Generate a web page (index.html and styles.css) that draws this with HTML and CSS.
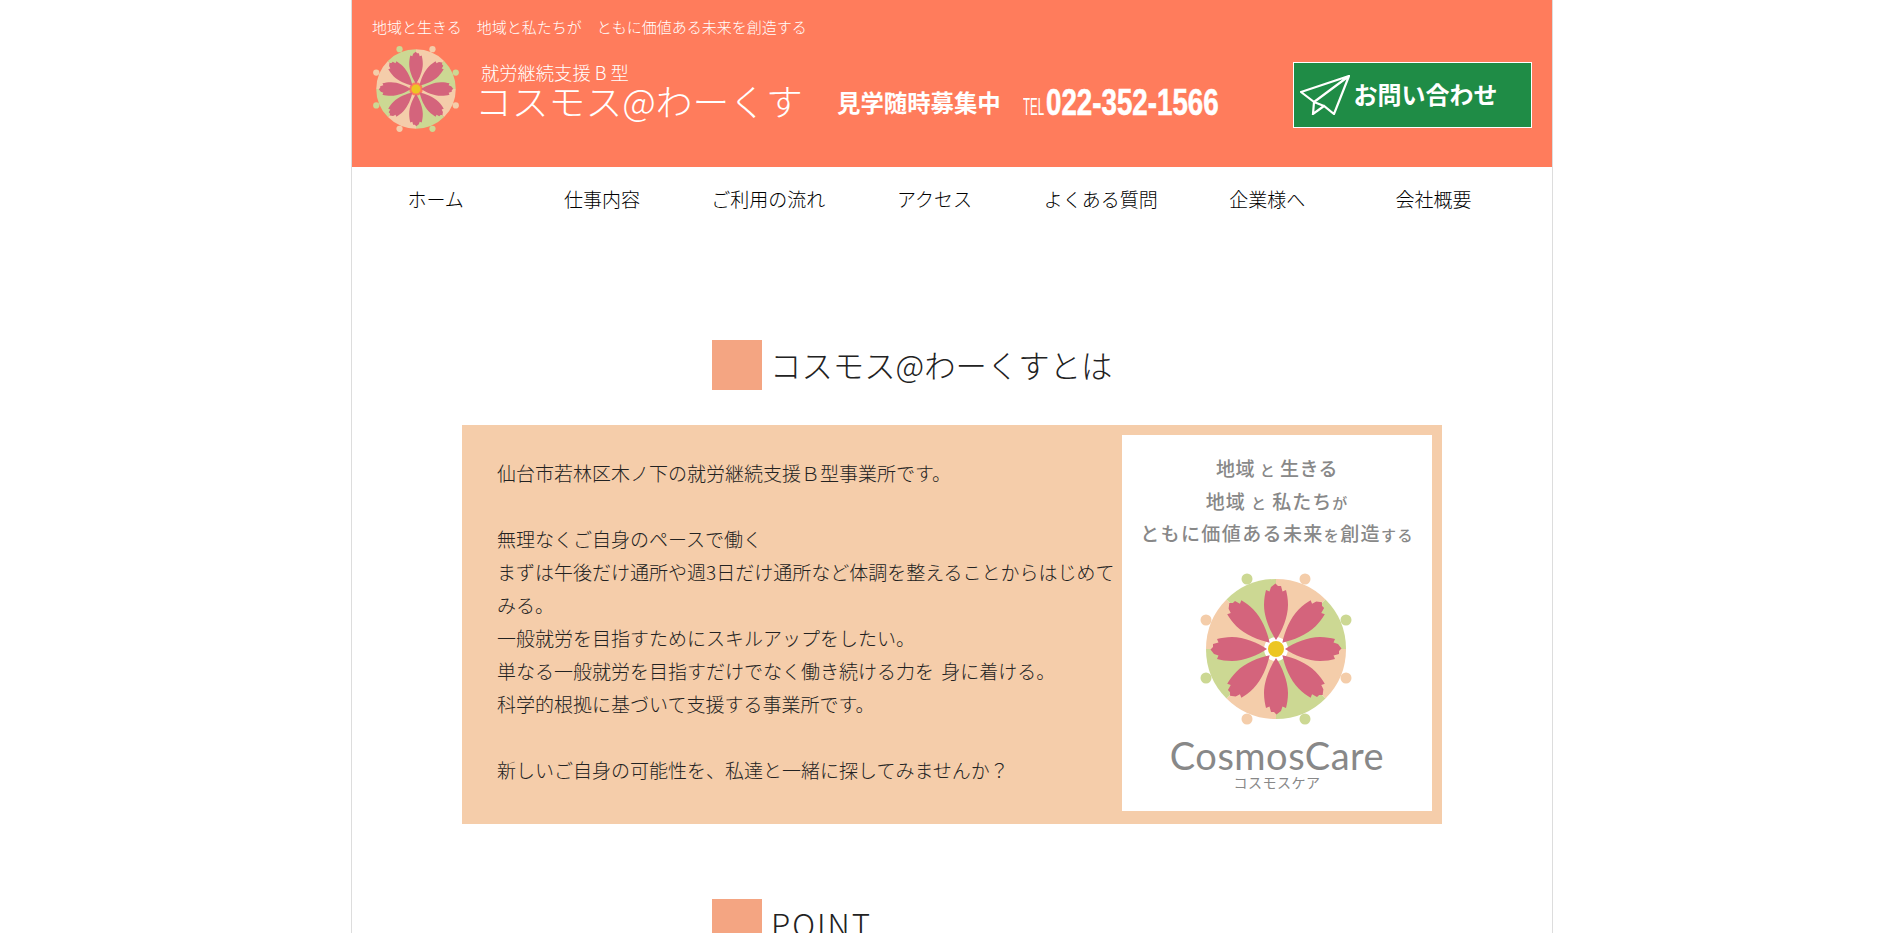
FILE: index.html
```html
<!DOCTYPE html>
<html lang="ja">
<head>
    <meta charset="UTF-8">
    <meta name="viewport" content="width=device-width, initial-scale=1.0">
    <title>コスモス@わーくす</title>
    <link rel="stylesheet" href="styles.css">
</head>
<body>
    <svg class="defs" width="0" height="0">
        <defs>
            <path id="petal" d="M0 -9 C-6 -18 -12 -32 -12 -44 C-12 -50 -11 -55 -10 -59 L-6.5 -57.5 L-5 -62 L-0.5 -65.5 L2 -63 L5 -63 L6.5 -57.5 L10 -59 C11 -55 12 -50 12 -44 C12 -32 6 -18 0 -9 Z"/>
            <symbol id="cosmos" viewBox="-81 -81 162 162">
                <path class="peach" d="M0 0 L0 -70 A70 70 0 0 1 49.5 -49.5 Z"/>
                <path class="green" d="M0 0 L49.5 -49.5 A70 70 0 0 1 70 0 Z"/>
                <path class="peach" d="M0 0 L70 0 A70 70 0 0 1 49.5 49.5 Z"/>
                <path class="green" d="M0 0 L49.5 49.5 A70 70 0 0 1 0 70 Z"/>
                <path class="peach" d="M0 0 L0 70 A70 70 0 0 1 -49.5 49.5 Z"/>
                <path class="green" d="M0 0 L-49.5 49.5 A70 70 0 0 1 -70 0 Z"/>
                <path class="peach" d="M0 0 L-70 0 A70 70 0 0 1 -49.5 -49.5 Z"/>
                <path class="green" d="M0 0 L-49.5 -49.5 A70 70 0 0 1 0 -70 Z"/>
                <circle class="peach" cx="29" cy="-70" r="5.5"/>
                <circle class="green" cx="70" cy="-29" r="5.5"/>
                <circle class="peach" cx="70" cy="29" r="5.5"/>
                <circle class="green" cx="29" cy="70" r="5.5"/>
                <circle class="peach" cx="-29" cy="70" r="5.5"/>
                <circle class="green" cx="-70" cy="29" r="5.5"/>
                <circle class="peach" cx="-70" cy="-29" r="5.5"/>
                <circle class="green" cx="-29" cy="-70" r="5.5"/>
                <circle class="halo" r="12"/>
                <use class="petal" href="#petal"/>
                <use class="petal" href="#petal" transform="rotate(45)"/>
                <use class="petal" href="#petal" transform="rotate(90)"/>
                <use class="petal" href="#petal" transform="rotate(135)"/>
                <use class="petal" href="#petal" transform="rotate(180)"/>
                <use class="petal" href="#petal" transform="rotate(225)"/>
                <use class="petal" href="#petal" transform="rotate(270)"/>
                <use class="petal" href="#petal" transform="rotate(315)"/>
                <circle class="core" r="8"/>
            </symbol>
        </defs>
    </svg>

    <div class="wrapper">
        <header class="site-header">
            <p class="tagline">地域と生きる　地域と私たちが　ともに価値ある未来を創造する</p>
            <div class="header-main">
                <svg class="header-logo"><use href="#cosmos"/></svg>
                <a class="brand" href="#">
                    <span class="brand-sub">就労継続支援 B 型</span>
                    <span class="brand-name">コスモス@わーくす</span>
                </a>
                <div class="visit">見学随時募集中</div>
                <div class="tel"><span class="tel-label">TEL</span><span class="tel-number">022-352-1566</span></div>
                <a class="contact-button" href="#">
                    <svg class="plane" viewBox="0 0 50 40">
                        <path d="M49 1 L1 17 L14 27 L13 39 L24 31 L34 39 Z M49 1 L14 27 M24 31 L14 27"/>
                    </svg>
                    <span class="contact-label">お問い合わせ</span>
                </a>
            </div>
        </header>

        <nav class="global-nav">
            <a href="#">ホーム</a>
            <a href="#">仕事内容</a>
            <a href="#">ご利用の流れ</a>
            <a href="#">アクセス</a>
            <a href="#">よくある質問</a>
            <a href="#">企業様へ</a>
            <a href="#">会社概要</a>
        </nav>

        <main class="content">
            <h2 class="section-title">コスモス@わーくすとは</h2>
            <section class="about-box">
                <div class="about-text">
                    <p>仙台市若林区木ノ下の就労継続支援Ｂ型事業所です。</p>
                    <p class="blank"></p>
                    <p>無理なくご自身のペースで働く</p>
                    <p>まずは午後だけ通所や週3日だけ通所など体調を整えることからはじめてみる。</p>
                    <p>一般就労を目指すためにスキルアップをしたい。</p>
                    <p>単なる一般就労を目指すだけでなく働き続ける力を 身に着ける。</p>
                    <p>科学的根拠に基づいて支援する事業所です。</p>
                    <p class="blank"></p>
                    <p>新しいご自身の可能性を、私達と一緒に探してみませんか？</p>
                </div>
                <div class="about-card">
                    <p class="card-copy">地域 <small>と</small> 生きる</p>
                    <p class="card-copy card-copy-mid">地域 <small>と</small> 私たち<small>が</small></p>
                    <p class="card-copy card-copy-wide">ともに価値ある未来<small>を</small>創造<small>する</small></p>
                    <svg class="card-logo"><use href="#cosmos"/></svg>
                    <p class="card-name">CosmosCare</p>
                    <p class="card-kana">コスモスケア</p>
                </div>
            </section>
            <h2 class="section-title section-title-next">POINT</h2>
        </main>
    </div>
</body>
</html>
```

FILE: styles.css
```css
/* Basic styles */
html, body {
    margin: 0;
    height: 933px;
    overflow: hidden;
}
body {
    font-family: "Noto Sans CJK JP", "Liberation Sans", sans-serif;
    background-color: #fff;
    color: #222;
}
p {
    margin: 0;
}
a {
    color: inherit;
    text-decoration: none;
}
.defs {
    display: block;
    height: 0;
}
.wrapper {
    width: 1200px;
    height: 933px;
    margin: 0 auto;
    outline: 1px solid #ddd;
    overflow: hidden;
}

/* Header */
.site-header {
    height: 167px;
    padding: 16px 20px 0;
    box-sizing: border-box;
    background-color: #ff7c5c;
    color: #fff;
}
.tagline {
    font-size: 15px;
    line-height: 22px;
    font-weight: 300;
    white-space: nowrap;
}
.header-main {
    display: flex;
    align-items: flex-start;
    margin-top: 5px;
}
.header-logo {
    width: 92px;
    height: 92px;
    margin: 0 13px 0 -2px;
    flex: none;
    color: #ff7c5c;
}
.brand {
    display: flex;
    flex-direction: column;
    flex: none;
    width: 362px;
    padding-top: 20px;
    font-weight: 300;
}
.brand-sub {
    padding-left: 6px;
    font-size: 18.3px;
    line-height: 18px;
    white-space: nowrap;
}
.brand-name {
    margin-top: -1px;
    font-size: 36.8px;
    line-height: 40px;
    white-space: nowrap;
}
.visit {
    flex: none;
    width: 185.5px;
    padding-top: 44px;
    font-size: 23.4px;
    line-height: 30px;
    font-weight: 700;
    white-space: nowrap;
}
.tel {
    display: flex;
    align-items: baseline;
    flex: none;
    width: 270px;
    padding-top: 40px;
    font-family: "Liberation Sans", sans-serif;
    white-space: nowrap;
}
.tel-label {
    display: block;
    width: 23px;
    font-size: 24px;
    line-height: 40px;
    transform: scaleX(0.48);
    transform-origin: left;
}
.tel-number {
    display: block;
    font-size: 36px;
    line-height: 40px;
    font-weight: 700;
    -webkit-text-stroke: 0.6px #fff;
    transform: scaleX(0.77);
    transform-origin: left;
}
.contact-button {
    display: flex;
    align-items: center;
    flex: none;
    box-sizing: border-box;
    width: 239px;
    height: 66px;
    margin-top: 19px;
    padding-left: 6px;
    background-color: #1f8c46;
    border: 1px solid #fff;
    font-size: 24px;
    font-weight: 700;
}
.plane {
    flex: none;
    width: 50px;
    height: 40px;
    margin-right: 4px;
    fill: none;
    stroke: #fff;
    stroke-width: 2.2;
}
.contact-label {
    padding-bottom: 4px;
}

/* Navigation */
.global-nav {
    display: grid;
    grid-template-columns: repeat(7, 166.3px);
    height: 62px;
    align-items: center;
    margin: 0 0 2px 0.5px;
    font-size: 19px;
    font-weight: 300;
    color: #000;
    text-align: center;
}

/* Content */
.content {
    padding-top: 109px;
}
.section-title {
    display: flex;
    align-items: center;
    gap: 8px;
    height: 50px;
    margin: 0 0 35px 360px;
    font-size: 31.4px;
    line-height: 46px;
    font-weight: 300;
    white-space: nowrap;
}
.section-title::before {
    content: "";
    width: 50px;
    height: 50px;
    background-color: #f4a582;
}
.section-title-next {
    gap: 9px;
    margin-top: 75px;
    margin-bottom: 0;
    letter-spacing: 2px;
}
.about-box {
    display: flex;
    box-sizing: border-box;
    width: 980px;
    height: 399px;
    margin-left: 110px;
    padding: 10px;
    background-color: #f5cdaa;
}
.about-text {
    flex: 1;
    padding: 22px 0 0 25px;
    font-size: 19px;
    line-height: 32.95px;
    font-weight: 300;
    word-spacing: 3px;
}
.blank {
    height: 32.95px;
}
.about-card {
    display: flex;
    flex-direction: column;
    align-items: center;
    flex: none;
    width: 310px;
    height: 376px;
    padding-top: 17px;
    box-sizing: border-box;
    background-color: #fff;
    color: #888;
}
.card-copy {
    font-size: 19px;
    line-height: 32.6px;
    font-weight: 500;
    letter-spacing: 0.5px;
    white-space: nowrap;
}
.card-copy small {
    font-size: 15px;
    line-height: 1;
}
.card-copy-mid {
    letter-spacing: 1px;
}
.card-copy-wide {
    letter-spacing: 1.4px;
}
.card-logo {
    width: 162px;
    height: 162px;
    margin: 18px 2px 0 0;
    color: #fff;
}
.card-name {
    margin-top: 3px;
    font-family: "Lato", sans-serif;
    font-size: 38px;
    line-height: 44px;
    letter-spacing: 0.5px;
}
.card-kana {
    margin-top: -4px;
    font-size: 14px;
    line-height: 18px;
    letter-spacing: 0.5px;
}

/* Logo colours */
.peach { fill: #f4cdaa; }
.green { fill: #ccd893; }
.halo { fill: currentColor; }
.petal { fill: #d4647c; }
.core { fill: #ecc623; }
.header-logo .petal { fill: #de6f8a; }
```
